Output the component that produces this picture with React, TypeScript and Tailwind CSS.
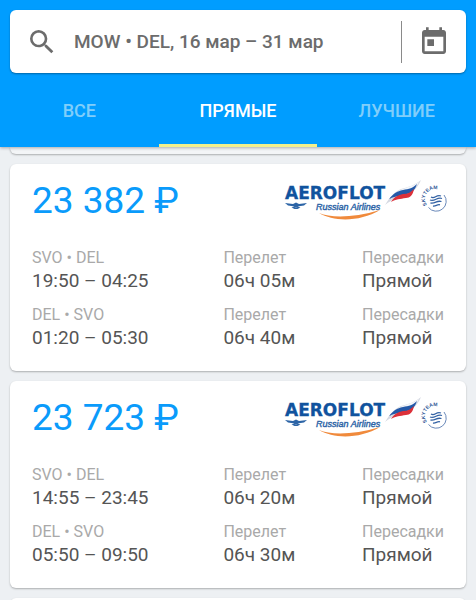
import { useState } from "react";

type Leg = { route: string; time: string; duration: string; stops: string };
type Flight = { price: string; legs: Leg[] };

const flights: Flight[] = [
  {
    price: "23 382 ₽",
    legs: [
      { route: "SVO • DEL", time: "19:50 – 04:25", duration: "06ч 05м", stops: "Прямой" },
      { route: "DEL • SVO", time: "01:20 – 05:30", duration: "06ч 40м", stops: "Прямой" },
    ],
  },
  {
    price: "23 723 ₽",
    legs: [
      { route: "SVO • DEL", time: "14:55 – 23:45", duration: "06ч 20м", stops: "Прямой" },
      { route: "DEL • SVO", time: "05:50 – 09:50", duration: "06ч 30м", stops: "Прямой" },
    ],
  },
];

const tabs = ["ВСЕ", "ПРЯМЫЕ", "ЛУЧШИЕ"];

function SearchIcon() {
  return (
    <svg viewBox="0 0 24 24" className="size-8 shrink-0 fill-current" aria-hidden="true">
      <path d="M15.5 14h-.79l-.28-.27A6.47 6.47 0 0 0 16 9.5 6.5 6.5 0 1 0 9.5 16c1.61 0 3.09-.59 4.23-1.57l.27.28v.79l5 4.99L20.49 19l-4.99-5zm-6 0C7.01 14 5 11.99 5 9.5S7.01 5 9.5 5 14 7.01 14 9.5 11.99 14 9.5 14z" />
    </svg>
  );
}

function CalendarIcon() {
  return (
    <svg viewBox="0 0 24 24" className="size-8 fill-current" aria-hidden="true">
      <path d="M19 3h-1V1h-2v2H8V1H6v2H5c-1.11 0-1.99.9-1.99 2L3 19c0 1.1.89 2 2 2h14c1.1 0 2-.9 2-2V5c0-1.1-.9-2-2-2zm0 16H5V8h14v11zM7 10h5v5H7z" />
    </svg>
  );
}

function AeroflotLogo() {
  return (
    <svg viewBox="0 0 160 44" className="h-11 w-40 shrink-0 overflow-visible" role="img" aria-label="Aeroflot Russian Airlines, SkyTeam">
      {/* flag */}
      <path d="M100 27C105 19 109 14 116 11c8-2 14-4 20-9-3 7-7 11-12 13.500-9 3-16 5-24 11.500z" fill="#d5d9e2" />
      <path d="M112 14c4-3 7-3 11-5 4-1 8-3 11-5-2 4-5 6-9 7-5 1-9 1-13 3z" fill="#f4f6fa" />
      <path d="M104 21c4-5 8-8 14-9 6-1 10-2 14-6-2 6-5 9-10 10-7 2-12 2-18 5z" fill="#2459a8" />
      <path d="M106 24c3-5 7-7 12-8 5 0 8-2 11-5-1 6-4 9-8 9-6 1-10 1-15 4z" fill="#dc3039" />
      <text x="0" y="21" fontSize="17" className="fill-[#10539e] stroke-[#10539e] stroke-[0.3px] font-['DejaVu_Sans',sans-serif] font-bold">
        AEROFLOT
      </text>
      <text x="31" y="32" fontSize="9" className="fill-[#2c64a6] stroke-[#2c64a6] stroke-[0.4px] font-['Liberation_Sans',sans-serif] italic">
        Russian Airlines
      </text>
      {/* winged emblem */}
      <g fill="#2c64a6">
        <path d="M0 25l8 1 3-1.500 3 1.500 8-1-3 2.500-5 .8-3 1.400-3-1.400-5-.8z" />
        <path d="M6.500 29.500l2.500-.7 2 1 2-1 2.500.7-3 1.500h-3z" />
      </g>
      {/* orange swoosh */}
      <path d="M34 35c12 5 34 5 61-3-20 12-46 12-61 3z" fill="#f08a3c" />
      {/* alliance badge */}
      <path d="M143.500 29.500a9 9 0 0 0 15.500-12.500" fill="none" stroke="#6a89ba" strokeWidth="1" />
      <path id="badge-arc" d="M142 27A9 9 0 0 1 158 15" fill="none" />
      <text fontSize="5" className="fill-[#2f5596] font-['Liberation_Sans',sans-serif] font-bold">
        <textPath href="#badge-arc">SKYTEAM</textPath>
      </text>
      <path
        d="M146 19c4 2.500 5-3 10-1M145 22c5 2 7-3.500 12-1.500M145.500 25c5 1 6-3 11-1.500M148 28c3 .5 4-2 7-1.200"
        fill="none"
        stroke="#3463a5"
        strokeWidth="1.300"
      />
    </svg>
  );
}

const cardShadow = "shadow-[0_1px_2px_rgba(0,0,0,0.28)]";

function FlightCard({ flight }: { flight: Flight }) {
  return (
    <article className={`rounded-md bg-white px-[22px] pt-3 pb-5 ${cardShadow}`}>
      <div className="flex h-[72px] items-start justify-between">
        <h2 className="text-[37px] leading-[50px] text-[#0a9bfb]">{flight.price}</h2>
        <div className="-mr-px pt-0.5">
          <AeroflotLogo />
        </div>
      </div>
      <div className="flex flex-col gap-[11px]">
        {flight.legs.map((leg) => (
          <dl key={leg.route} className="grid grid-cols-[192fr_139fr_auto]">
            {[
              [leg.route, leg.time],
              ["Перелет", leg.duration],
              ["Пересадки", leg.stops],
            ].map(([label, value]) => (
              <div key={label}>
                <dt className="text-base leading-5 text-[#a9a9a9]">{label}</dt>
                <dd className="text-[19px] leading-[26px] text-[#555]">{value}</dd>
              </div>
            ))}
          </dl>
        ))}
      </div>
    </article>
  );
}

export default function App() {
  const [active, setActive] = useState(1);
  return (
    <div className="flex h-screen flex-col overflow-hidden bg-[#edf0f3] font-[Roboto,sans-serif]">
      <header className="z-10 shrink-0 bg-[#009dff] pt-2.5 shadow-[0_1px_3px_rgba(0,0,0,0.3)]">
        <div className="mx-2.5 flex h-[63px] items-center rounded-md bg-white px-4 text-[#6c6c6c] shadow-[0_1px_2px_rgba(0,0,0,0.35)]">
          <label htmlFor="route" aria-label="Поиск" className="shrink-0">
            <SearchIcon />
          </label>
          <input
            id="route"
            type="text"
            defaultValue="MOW • DEL, 16 мар – 31 мар"
            className="ml-4 h-10 min-w-0 flex-1 bg-transparent text-[19px] font-medium outline-none"
          />
          <div className="h-[42px] w-px bg-[#8a8a8a]" />
          <button type="button" aria-label="Календарь" className="ml-4 shrink-0">
            <CalendarIcon />
          </button>
        </div>
        <div role="tablist" className="grid h-[74px] grid-cols-3">
          {tabs.map((tab, i) => (
            <button
              key={tab}
              type="button"
              role="tab"
              aria-selected={i === active}
              onClick={() => setActive(i)}
              className={`border-b-3 pt-1 text-[18px] font-medium ${
                i === active ? "border-[#f3f08c] text-white" : "border-transparent text-[#80cefa]"
              }`}
            >
              {tab}
            </button>
          ))}
        </div>
      </header>
      <main className="flex min-h-0 flex-1 flex-col gap-2.5 overflow-hidden px-2.5">
        <div className={`h-[7px] shrink-0 rounded-b-md bg-[#f3f5f7] ${cardShadow}`} />
        {flights.map((flight) => (
          <FlightCard key={flight.price} flight={flight} />
        ))}
        <div className={`h-12 shrink-0 rounded-md bg-white ${cardShadow}`} />
      </main>
    </div>
  );
}
